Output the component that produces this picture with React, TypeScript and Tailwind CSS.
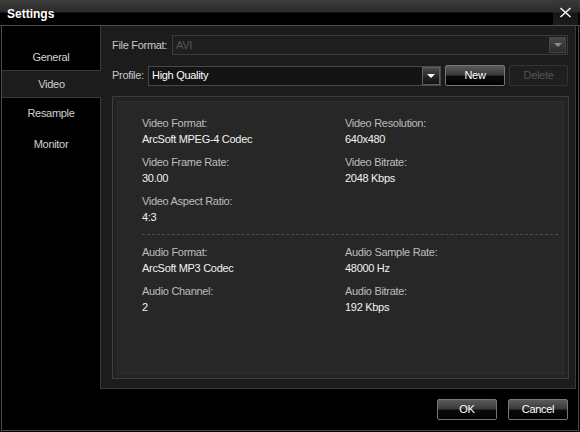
import React from "react";

function Arrow({ disabled }: { disabled?: boolean }) {
  return disabled ? (
    <div className="w-[17px] h-[16px] flex items-center justify-center border border-[#444] bg-[linear-gradient(to_bottom,#474747,#2c2c2c)]">
      <div className="w-0 h-0 border-x-[4px] border-t-[4px] border-x-transparent border-t-[#8a8a8a]" />
    </div>
  ) : (
    <div className="w-[18px] h-[18px] flex items-center justify-center border border-[#5e5e5e] bg-[linear-gradient(to_bottom,#4a4a4a,#262626_55%,#111)]">
      <div className="w-0 h-0 border-x-[4px] border-t-[4px] border-x-transparent border-t-white" />
    </div>
  );
}

function GlossButton({ children, className = "" }: { children: React.ReactNode; className?: string }) {
  return (
    <div
      className={`h-[21px] w-[60px] flex items-center justify-center rounded-[2px] border border-[#767676] bg-[linear-gradient(to_bottom,#5a5a5a,#3b3b3b_45%,#0b0b0b_55%,#000)] text-white text-[11px] ${className}`}
    >
      {children}
    </div>
  );
}

function Field({ label, value }: { label: string; value: string }) {
  return (
    <div className="leading-[16px]">
      <div className="text-[#bdbdbd]">{label}</div>
      <div className="text-[#f2f2f2]">{value}</div>
    </div>
  );
}

export default function App() {
  return (
    <div className="w-[580px] h-[432px] bg-black flex flex-col overflow-hidden font-['Liberation_Sans',Arial,sans-serif] text-[11px] tracking-[-0.3px] select-none">
      {/* Title bar */}
      <div className="h-[26px] shrink-0 flex items-stretch border-b border-[#4c4c4c] bg-[linear-gradient(to_bottom,#3e3e3e,#2a2a2a_48%,#000_52%,#000)]">
        <div className="flex-1 flex items-center pl-[7px] pt-[2px] text-white font-bold text-[12px] tracking-normal">
          Settings
        </div>
        <div className="w-[25px] mr-[2px] flex items-center justify-center bg-[linear-gradient(to_bottom,#3a3a3a,#2a2a2a_48%,#161616_52%,#1c1c1c)]">
          <svg width="13" height="11" viewBox="0 0 13 11">
            <path d="M1.5 1 L11.5 10 M11.5 1 L1.5 10" stroke="#f4f4f4" strokeWidth="1.6" fill="none" />
          </svg>
        </div>
      </div>

      {/* Frame */}
      <div className="flex-1 mx-px mb-px border-x border-b border-[#4a4a4a] flex flex-col min-h-0">
        <div className="h-[363px] shrink-0 flex">
          {/* Sidebar */}
          <div className="w-[99px] shrink-0 flex flex-col text-[#d2d2d2]">
            <div className="h-[45px] bg-black border-r border-b border-[#3a3a3a] flex items-end justify-center pb-[5px] leading-[16px]">
              General
            </div>
            <div className="h-[26px] bg-[#1c1c1c] flex items-center justify-center leading-[16px]">
              Video
            </div>
            <div className="flex-1 bg-black border-r border-t border-[#3a3a3a] flex flex-col items-center pt-[7px] gap-[15px] leading-[16px]">
              <div>Resample</div>
              <div>Monitor</div>
            </div>
          </div>

          {/* Content */}
          <div className="w-[475px] shrink-0 bg-[#1c1c1c] border-r border-b border-[#3a3a3a] pl-[11px] pr-[6px] pt-[9px] pb-[9px] flex flex-col">
            <div className="h-[20px] flex items-center">
              <div className="w-[60px] text-[#c8c8c8]">File Format:</div>
              <div className="w-[396px] h-[20px] border border-[#3a3a3a] bg-[#1f1f1f] flex items-center pl-[3px] pr-px">
                <span className="flex-1 text-[#575757]">AVI</span>
                <Arrow disabled />
              </div>
            </div>

            <div className="mt-[10px] h-[21px] flex items-center">
              <div className="w-[36px] text-[#c8c8c8]">Profile:</div>
              <div className="w-[293px] h-[20px] border border-[#484848] bg-[#141414] flex items-center pl-[3px]">
                <span className="flex-1 text-white">High Quality</span>
                <Arrow />
              </div>
              <GlossButton className="ml-[4px]">New</GlossButton>
              <div className="ml-[4px] h-[21px] w-[59px] flex items-center justify-center rounded-[2px] border border-[#333] bg-[#1f1f1f] text-[#545454]">
                Delete
              </div>
            </div>

            {/* Details panel */}
            <div className="mt-[10px] flex-1 border border-[#3d3d3d] bg-[#232323] p-[4px] flex">
              <div className="flex-1 border border-[#2f2f2f] bg-[#272727] pt-[13px] pl-[24px] pr-[5px]">
                <div className="grid grid-cols-[203px_1fr] gap-y-[7px]">
                  <Field label="Video Format:" value="ArcSoft MPEG-4 Codec" />
                  <Field label="Video Resolution:" value="640x480" />
                  <Field label="Video Frame Rate:" value="30.00" />
                  <Field label="Video Bitrate:" value="2048 Kbps" />
                  <Field label="Video Aspect Ratio:" value="4:3" />
                  <div />
                </div>
                <div className="mt-[9px] mb-[9px] border-t border-dashed border-[#4e4e4e]" />
                <div className="grid grid-cols-[203px_1fr] gap-y-[7px]">
                  <Field label="Audio Format:" value="ArcSoft MP3 Codec" />
                  <Field label="Audio Sample Rate:" value="48000 Hz" />
                  <Field label="Audio Channel:" value="2" />
                  <Field label="Audio Bitrate:" value="192 Kbps" />
                </div>
              </div>
            </div>
          </div>
        </div>

        {/* Footer */}
        <div className="flex-1 flex justify-end items-start pt-[10px] pr-[10px] gap-[11px]">
          <GlossButton>OK</GlossButton>
          <GlossButton>Cancel</GlossButton>
        </div>
      </div>
    </div>
  );
}
